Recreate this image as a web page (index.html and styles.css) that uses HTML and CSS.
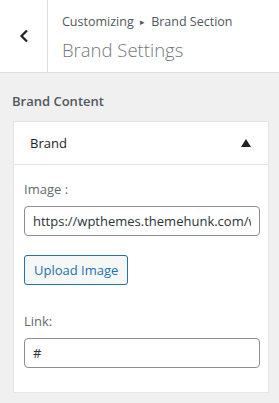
FILE: index.html
```html
<!DOCTYPE html>
<html>
<head>
  <title>Brand Settings</title>
  <link rel="stylesheet" href="styles.css">
</head>
<body>
  <div class="section-header">
    <button class="back-button" aria-label="Back">
      <svg width="12" height="14" viewBox="0 0 12 14"><path d="M9 1.5 3.5 7 9 12.5" fill="none" stroke="#1d2327" stroke-width="2.2"/></svg>
    </button>
    <div class="section-title">
      <span class="crumbs">Customizing <span class="sep">&#9656;</span> Brand Section</span>
      <h3>Brand Settings</h3>
    </div>
  </div>

  <div class="content">
    <h4 class="group-title">Brand Content</h4>
    <div class="card">
      <div class="card-head">
        <span>Brand</span>
        <span class="arrow"></span>
      </div>
      <div class="card-body">
        <label for="image-url">Image :</label>
        <input type="text" id="image-url" value="https://wpthemes.themehunk.com/wp-content/uploads/brand.png">
        <button class="upload-button">Upload Image</button>

        <label for="link" class="link-label">Link:</label>
        <input type="text" id="link" value="#">
      </div>
    </div>
  </div>
</body>
</html>
```

FILE: styles.css
```css
body {
  margin: 0;
  font-family: "Open Sans", "Noto Sans", sans-serif;
  background-color: #f0f0f1;
  color: #50575e;
  width: 279px;
  height: 403px;
  overflow: hidden;
}

.section-header {
  display: flex;
  height: 72px;
  background-color: #ffffff;
  border-bottom: 1px solid #dcdcde;
}

.back-button {
  width: 48px;
  height: 72px;
  padding: 0;
  border: none;
  border-right: 1px solid #dcdcde;
  background: #ffffff;
  display: flex;
  align-items: center;
  justify-content: center;
}

.section-title {
  padding: 12px 0 0 14px;
}

.crumbs {
  display: block;
  font-size: 12.5px;
  line-height: 20px;
  color: #50575e;
}

.sep {
  font-size: 9px;
  margin: 0 3px;
  position: relative;
  top: -1px;
}

.section-title h3 {
  margin: 4px 0 0;
  font-size: 18.5px;
  font-weight: 300;
  line-height: 26px;
  color: #72777c;
}

.content {
  padding: 0 8px 0 13px;
}

.group-title {
  margin: 16px 0 0 -1px;
  font-size: 13px;
  font-weight: 600;
  line-height: 24px;
  color: #50575e;
}

.card {
  margin-top: 8px;
  width: 256px;
  background-color: #ffffff;
  border: 1px solid #e4e4e6;
  box-sizing: border-box;
}

.card-head {
  display: flex;
  justify-content: space-between;
  align-items: center;
  height: 42px;
  padding: 0 17px 0 16px;
  border-bottom: 1px solid #e4e4e6;
  font-size: 13px;
  color: #1d2327;
}

.arrow {
  width: 0;
  height: 0;
  border-left: 5px solid transparent;
  border-right: 5px solid transparent;
  border-bottom: 8px solid #1d2327;
  margin-top: -1px;
}

.card-body {
  padding: 14px 10px 24px 10px;
}

label {
  display: block;
  font-size: 13px;
  line-height: 20px;
  color: #646970;
  margin-bottom: 7px;
}

input[type="text"] {
  display: block;
  width: 236px;
  height: 30px;
  box-sizing: border-box;
  padding: 0 8px;
  border: 1px solid #8c8f94;
  border-radius: 4px;
  font-family: inherit;
  font-size: 13px;
  color: #2c3338;
}

.upload-button {
  margin-top: 19px;
  height: 30px;
  padding: 0 9px;
  border: 1px solid #2271b1;
  border-radius: 3px;
  background-color: #f6f7f7;
  color: #2271b1;
  font-family: inherit;
  font-size: 13px;
}

.link-label {
  margin-top: 26px;
  margin-bottom: 7px;
}
```
